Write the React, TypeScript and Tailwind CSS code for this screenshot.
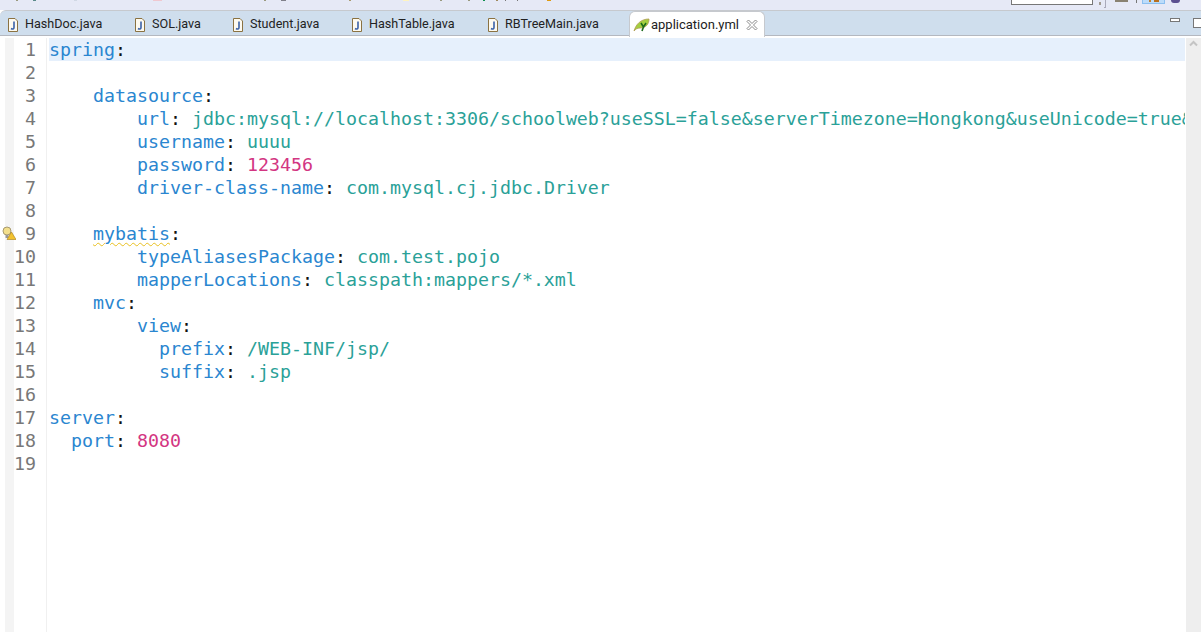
const tabs = [
  { name: 'HashDoc.java', width: 'w-[127px]' },
  { name: 'SOL.java', width: 'w-[98px]' },
  { name: 'Student.java', width: 'w-[119px]' },
  { name: 'HashTable.java', width: 'w-[136px]' },
  { name: 'RBTreeMain.java', width: 'w-[141px]' },
]

// bottoms of the toolbar icons that stick out under the crop
const toolbarBits = [
  'ml-[16px] w-[2px] bg-[#9a9a80]',
  'ml-[15px] w-[3px] bg-[#5a8a8a]',
  'ml-[38px] w-[3px] bg-[#d0d8e4]',
  'ml-[76px] w-[9px] bg-[#f0c8d0]',
  'ml-[102px] w-[2px] bg-[#9a9a80]',
  'ml-[15px] w-[5px] bg-[#80808a]',
  'ml-[63px] w-[2px] bg-[#a89a70]',
  'ml-[52px] w-[6px] bg-[#fff4c0]',
  'ml-[31px] w-[2px] bg-[#9a9a80]',
  'ml-[26px] w-[2px] bg-[#9a9a80]',
  'ml-[13px] w-[2px] bg-[#109050]',
  'ml-[11px] w-[2px] bg-[#a08a60]',
  'ml-[7px] w-[1px] bg-[#777]',
  'ml-[11px] w-[1px] bg-[#777]',
  'ml-[29px] w-[4px] bg-[#e09a10]',
]

type Tok = { t: string; c?: 'key' | 'val' | 'num' }

const lines: Tok[][] = [
  [{ t: 'spring', c: 'key' }, { t: ':' }],
  [],
  [{ t: '    ' }, { t: 'datasource', c: 'key' }, { t: ':' }],
  [{ t: '        ' }, { t: 'url', c: 'key' }, { t: ': ' }, { t: 'jdbc:mysql://localhost:3306/schoolweb?useSSL=false&serverTimezone=Hongkong&useUnicode=true&', c: 'val' }],
  [{ t: '        ' }, { t: 'username', c: 'key' }, { t: ': ' }, { t: 'uuuu', c: 'val' }],
  [{ t: '        ' }, { t: 'password', c: 'key' }, { t: ': ' }, { t: '123456', c: 'num' }],
  [{ t: '        ' }, { t: 'driver-class-name', c: 'key' }, { t: ': ' }, { t: 'com.mysql.cj.jdbc.Driver', c: 'val' }],
  [],
  [{ t: '    ' }, { t: 'mybatis', c: 'key' }, { t: ':' }],
  [{ t: '        ' }, { t: 'typeAliasesPackage', c: 'key' }, { t: ': ' }, { t: 'com.test.pojo', c: 'val' }],
  [{ t: '        ' }, { t: 'mapperLocations', c: 'key' }, { t: ': ' }, { t: 'classpath:mappers/*.xml', c: 'val' }],
  [{ t: '    ' }, { t: 'mvc', c: 'key' }, { t: ':' }],
  [{ t: '        ' }, { t: 'view', c: 'key' }, { t: ':' }],
  [{ t: '          ' }, { t: 'prefix', c: 'key' }, { t: ': ' }, { t: '/WEB-INF/jsp/', c: 'val' }],
  [{ t: '          ' }, { t: 'suffix', c: 'key' }, { t: ': ' }, { t: '.jsp', c: 'val' }],
  [],
  [{ t: 'server', c: 'key' }, { t: ':' }],
  [{ t: '  ' }, { t: 'port', c: 'key' }, { t: ': ' }, { t: '8080', c: 'num' }],
  [],
]

function JavaIcon() {
  return (
    <svg width="12" height="14" viewBox="0 0 12 14" className="shrink-0">
      <path d="M1.500 .5H8L10.500 3V13.500H1.500Z" fill="#fdfaf0" stroke="#8a7242" />
      <path d="M7 3.500V9.500C7 11 5.500 11.500 4 10.500" fill="none" stroke="#3a62a8" strokeWidth="1.600" />
    </svg>
  )
}

function SpringIcon() {
  return (
    <svg width="17" height="14" viewBox="0 0 17 14" className="shrink-0">
      <path d="M1 13C3 6 8 1 16 1C16 6 13 10 7 10C4 10 3 11 1 13Z" fill="#a4cf40" stroke="#b09a50" strokeWidth=".8" />
      <path d="M8 5L10.500 9L13 5M10.500 9L9 13" fill="none" stroke="#1c6a1c" strokeWidth="1.600" />
    </svg>
  )
}

function CloseIcon() {
  return (
    <svg width="12" height="12" viewBox="0 0 12 12" className="shrink-0">
      <path d="M1 2.500L2.500 1L6 4.500L9.500 1L11 2.500L7.500 6L11 9.500L9.500 11L6 7.500L2.500 11L1 9.500L4.500 6Z" fill="#fff" stroke="#8a8a8a" />
    </svg>
  )
}

export default function App() {
  return (
    <div className="w-[1201px] h-[632px] overflow-hidden flex flex-col bg-white font-['Roboto',sans-serif]">
      <div className="h-[10px] shrink-0 bg-[#e6e9f6] flex items-start">
        {toolbarBits.map((bit) => (
          <div key={bit} className={`h-[1px] shrink-0 ${bit}`} />
        ))}
        <div className="ml-[460px] w-[82px] h-[5px] bg-white border-b border-x border-[#777] shrink-0" />
        <div className="ml-[6px] mt-[2px] w-[2px] h-[3px] bg-[#a09a90] shrink-0" />
        <div className="ml-[3px] w-[2px] h-[8px] border-r border-b border-[#aab] shrink-0" />
        <div className="ml-[9px] w-[13px] h-[2px] bg-[#8a8272] shrink-0" />
        <div className="ml-[8px] w-[1px] h-[3px] bg-[#777] shrink-0" />
        <div className="ml-[5px] w-[23px] h-[4px] bg-[#bcdcfa] border-x border-b border-[#8cc0f0] flex justify-center gap-[3px] shrink-0">
          <div className="w-[2px] h-[2px] bg-[#c08030]" />
          <div className="w-[5px] h-[2px] bg-[#b87020]" />
        </div>
        <div className="ml-[6px] w-[9px] h-[3px] rounded-b-full bg-[#5c5090] shrink-0" />
      </div>
      <div className="h-[26px] shrink-0 bg-[#cfdeed] border-t border-b border-[#c6c9ce] border-b-[#b4b8c0] flex rounded-tl-md">
        <div className="flex pl-[7px]">
          {tabs.map((tab) => (
            <div key={tab.name} className={`flex items-center pt-[3px] gap-[6px] text-[12.6px] text-[#222] ${tab.width}`}>
              <JavaIcon />
              <span>{tab.name}</span>
            </div>
          ))}
        </div>
        <div className="ml-[1px] w-[136px] h-[26px] -mb-px bg-white rounded-t-md border border-b-0 border-[#c6c9ce] flex items-center pl-[3px] gap-[1px] text-[13px] text-[#222]">
          <SpringIcon />
          <span>application.yml</span>
          <span className="ml-[6px] flex"><CloseIcon /></span>
        </div>
        <div className="ml-auto -mr-[2px] flex items-start pt-[7px] gap-[13px]">
          <div className="w-[10px] h-[4px] border border-[#777] bg-white" />
          <div className="w-[10px] h-[10px] border border-[#777] bg-white" />
        </div>
      </div>
      <div className="flex-1 flex min-h-0 pt-[2px]">
        <div className="w-[47px] shrink-0 flex border-r border-[#f0f0f0]">
          <div className="w-[15px] pl-[5px]">
            <div className="h-full bg-[#f4f4f4]" />
          </div>
          <div className="flex-1">
            {lines.map((_, i) => (
              <div key={i} className="relative h-[23px] text-right pr-[10px] font-['DejaVu_Sans_Mono',monospace] text-[18.27px] leading-[23px] text-[#787878]">
                {i === 8 && (
                  <svg width="14" height="14" viewBox="0 0 14 14" className="absolute left-[-12px] top-[4px]">
                    <circle cx="5" cy="5" r="4" fill="#f3df8c" stroke="#a89a70" />
                    <rect x="3.500" y="9" width="3" height="3" fill="#999" />
                    <path d="M9.500 6L14 13.500H5Z" fill="#f2c230" stroke="#a67c10" strokeWidth=".6" />
                  </svg>
                )}
                {i + 1}
              </div>
            ))}
          </div>
        </div>
        <div className="flex-1 min-w-0 pl-[2px] overflow-hidden font-['DejaVu_Sans_Mono',monospace] text-[18.27px] leading-[23px]">
          {lines.map((toks, i) => (
            <div key={i} className={`h-[23px] whitespace-pre ${i === 0 ? 'bg-[#e6f0fc]' : ''}`}>
              {toks.map((tok, j) => (
                <span
                  key={j}
                  className={
                    tok.c === 'key'
                      ? `text-[#2a86d0] ${tok.t === 'mybatis' ? 'underline decoration-wavy decoration-[#e8c020] decoration-1 underline-offset-2' : ''}`
                      : tok.c === 'val'
                        ? 'text-[#2aa198]'
                        : tok.c === 'num'
                          ? 'text-[#d33682]'
                          : 'text-[#111]'
                  }
                >
                  {tok.t}
                </span>
              ))}
            </div>
          ))}
        </div>
        <div className="w-[15px] shrink-0 bg-[#eeeeee] flex justify-center pt-[2px] ml-px">
          <svg width="9" height="7" viewBox="0 0 9 7">
            <path d="M1 5.500L4.500 2L8 5.500" fill="none" stroke="#c4c4c4" strokeWidth="2" />
          </svg>
        </div>
      </div>
    </div>
  )
}
